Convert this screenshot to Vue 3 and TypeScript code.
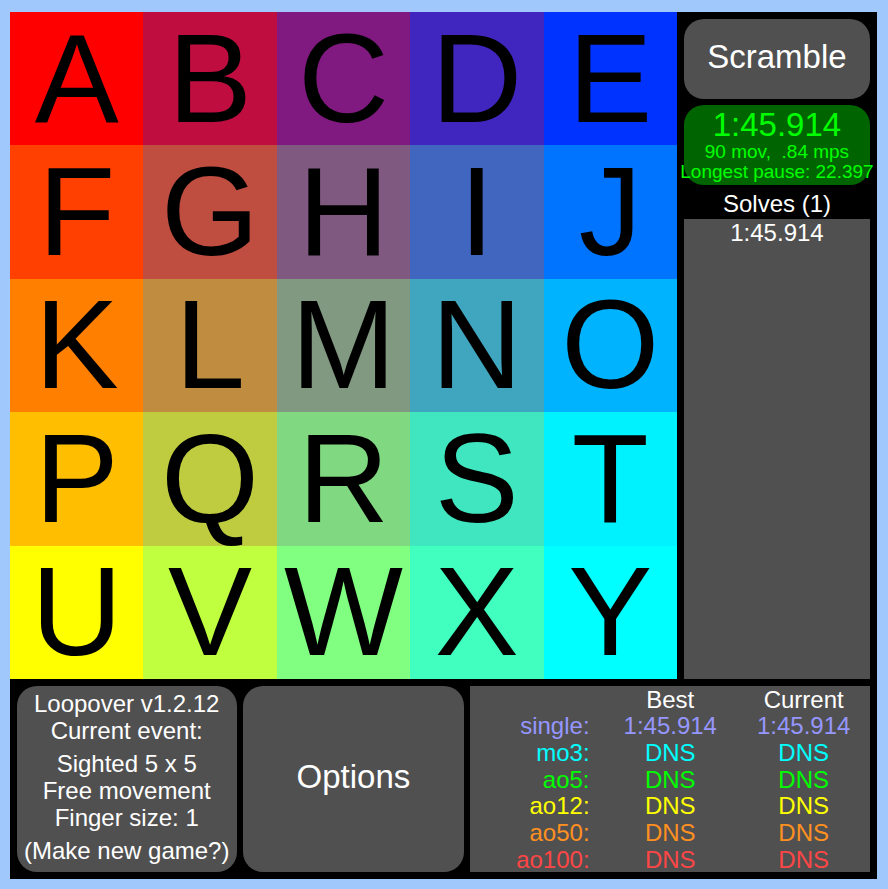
<script setup lang="ts">
interface Tile {
  letter: string
  color: string
}

interface StatRow {
  label: string
  best: string
  current: string
  tone: string
}

const size = 5

function tileColor(col: number, row: number): string {
  const x = col / (size - 1)
  const y = row / (size - 1)
  const red = Math.round(255 * (1 - x))
  const green = Math.round(255 * Math.min(1, y + 0.2 * x))
  const blue = Math.round(255 * x)
  return `rgb(${red}, ${green}, ${blue})`
}

const tiles: Tile[] = Array.from({ length: size * size }, (_, i) => ({
  letter: String.fromCharCode(65 + i),
  color: tileColor(i % size, Math.floor(i / size)),
}))

const solves: string[] = ['1:45.914']

const stats: StatRow[] = [
  { label: 'single:', best: '1:45.914', current: '1:45.914', tone: 'single' },
  { label: 'mo3:', best: 'DNS', current: 'DNS', tone: 'mo3' },
  { label: 'ao5:', best: 'DNS', current: 'DNS', tone: 'ao5' },
  { label: 'ao12:', best: 'DNS', current: 'DNS', tone: 'ao12' },
  { label: 'ao50:', best: 'DNS', current: 'DNS', tone: 'ao50' },
  { label: 'ao100:', best: 'DNS', current: 'DNS', tone: 'ao100' },
]
</script>

<template>
  <main class="page">
    <div class="game">
      <div class="top">
        <div class="board">
          <div v-for="tile in tiles" :key="tile.letter" class="tile" :style="{ backgroundColor: tile.color }">
            {{ tile.letter }}
          </div>
        </div>
        <aside class="side">
          <button type="button" class="panel action">Scramble</button>
          <section class="timer">
            <div class="time">1:45.914</div>
            <div class="detail">90 mov,&nbsp; .84 mps</div>
            <div class="detail">Longest pause: 22.397</div>
          </section>
          <h2 class="solves-title">Solves ({{ solves.length }})</h2>
          <ol class="solves">
            <li v-for="(solve, i) in solves" :key="i">{{ solve }}</li>
          </ol>
        </aside>
      </div>
      <div class="bottom">
        <button type="button" class="panel event">
          <span class="lines">
            <span>Loopover v1.2.12</span>
            <span>Current event:</span>
          </span>
          <span class="lines">
            <span>Sighted 5 x 5</span>
            <span>Free movement</span>
            <span>Finger size: 1</span>
          </span>
          <span class="lines">
            <span>(Make new game?)</span>
          </span>
        </button>
        <button type="button" class="panel action">Options</button>
        <section class="stats">
          <table>
            <thead>
              <tr>
                <td></td>
                <th scope="col">Best</th>
                <th scope="col">Current</th>
              </tr>
            </thead>
            <tbody>
              <tr v-for="row in stats" :key="row.label" :class="row.tone">
                <th scope="row" class="label">{{ row.label }}</th>
                <td>{{ row.best }}</td>
                <td>{{ row.current }}</td>
              </tr>
            </tbody>
          </table>
        </section>
      </div>
    </div>
  </main>
</template>

<style>
body {
  margin: 0;
  background: #a0c8fc;
}
</style>

<style scoped>
.page {
  --unit: calc((100vw - 21px) / 130);
  box-sizing: border-box;
  padding: 12px 11px 10px 10px;
  color: #fff;
  font-family: Arial, "Liberation Sans", sans-serif;
  font-size: 24px;
  line-height: 27px;
}

.game {
  display: grid;
  grid-template-rows: minmax(0, 100fr) minmax(0, 30fr);
  aspect-ratio: 1;
  background: #000;
}

.top {
  display: grid;
  grid-template-rows: minmax(0, 1fr);
  grid-template-columns: minmax(0, 100fr) minmax(0, 30fr);
}

.board {
  display: grid;
  grid-template-rows: repeat(5, minmax(0, 1fr));
  grid-template-columns: repeat(5, minmax(0, 1fr));
}

.tile {
  display: flex;
  align-items: center;
  justify-content: center;
  color: #000;
  font-size: 126px;
  line-height: 1;
}

.side {
  display: grid;
  grid-template-rows: minmax(0, 12fr) minmax(0, 1fr) minmax(0, 12fr) minmax(0, 5fr) minmax(0, 69fr);
  grid-template-columns: minmax(0, 1fr);
  padding: var(--unit) var(--unit) 0;
}

.panel {
  margin: 0;
  border: 0;
  border-radius: 20px;
  background: #505050;
  color: inherit;
  font: inherit;
  cursor: pointer;
}

.action {
  padding: 0 0 3px;
  font-size: 33px;
  line-height: 36px;
}

.timer {
  grid-row: 3;
  display: flex;
  flex-direction: column;
  align-items: center;
  box-sizing: border-box;
  padding-top: 3px;
  border-radius: 20px;
  background: #006400;
  color: #0f0;
  white-space: nowrap;
}

.time {
  font-size: 33px;
  line-height: 34px;
}

.detail {
  font-size: 19px;
  line-height: 20px;
}

.solves-title {
  grid-row: 4;
  align-self: end;
  margin: 0;
  font-size: 24px;
  font-weight: 400;
  line-height: 30px;
  text-align: center;
}

.solves {
  grid-row: 5;
  margin: 0;
  padding: 0;
  background: #505050;
  line-height: 28px;
  list-style: none;
  text-align: center;
}

.bottom {
  display: grid;
  grid-template-rows: minmax(0, 1fr);
  grid-template-columns: minmax(0, 33fr) minmax(0, 33fr) minmax(0, 60fr);
  gap: var(--unit);
  padding: var(--unit);
}

.event {
  display: flex;
  flex-direction: column;
  gap: 6px;
  align-items: center;
  padding: 4px 0 0;
  white-space: nowrap;
}

.lines {
  display: flex;
  flex-direction: column;
  align-items: center;
}

.stats {
  background: #505050;
}

table {
  width: 100%;
  height: 100%;
  border-collapse: collapse;
  table-layout: fixed;
}

th,
td {
  padding: 2px 0 0;
  font-weight: 400;
  line-height: 24px;
  text-align: center;
}

.label {
  padding-right: 14px;
  text-align: right;
}

.single {
  color: #9696ff;
}

.mo3 {
  color: #0ff;
}

.ao5 {
  color: #0f0;
}

.ao12 {
  color: #ff0;
}

.ao50 {
  color: #ff9020;
}

.ao100 {
  color: #ff4646;
}
</style>
